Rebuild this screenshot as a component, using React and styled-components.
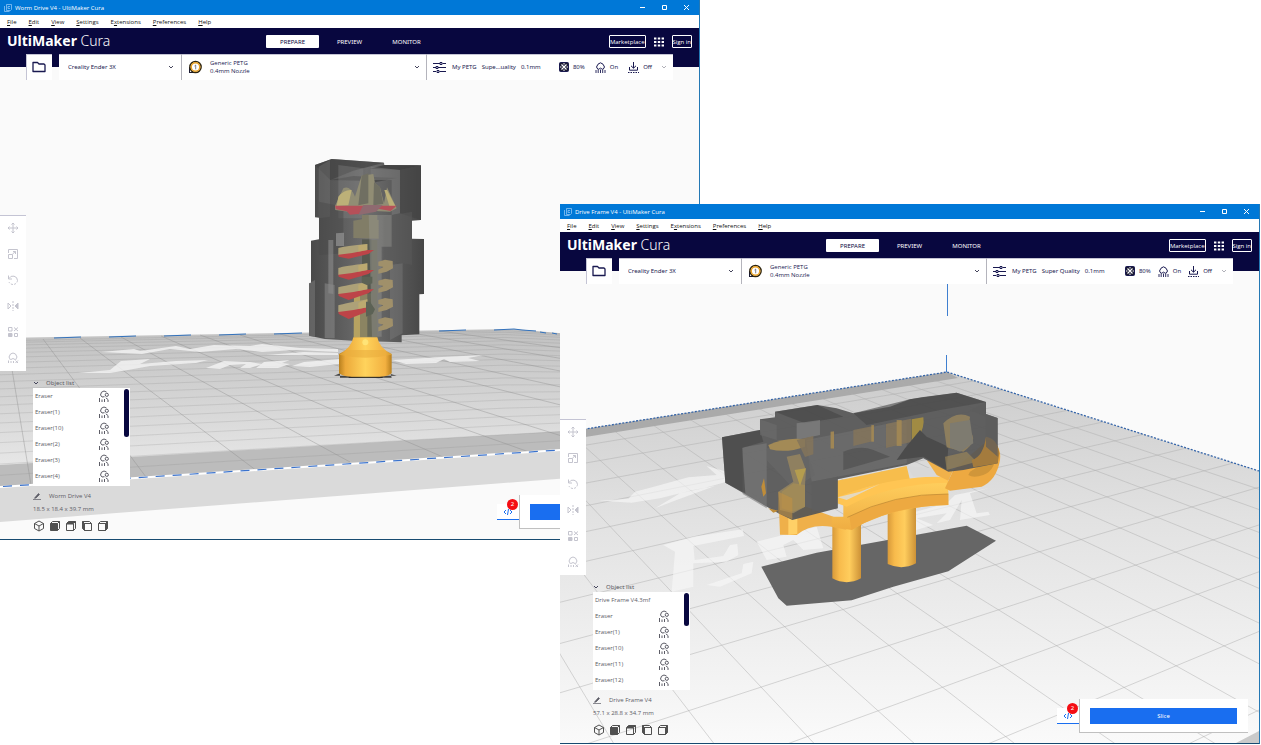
import React from "react";
import styled, { createGlobalStyle, css } from "styled-components";

const GlobalStyle = createGlobalStyle`
  *, *::before, *::after { box-sizing: border-box; }
  body {
    margin: 0;
    background: #ffffff;
    font-family: "Noto Sans", "Open Sans", sans-serif;
    font-size: 6px;
    line-height: 8px;
    color: #191950;
  }
  button, select, input { font: inherit; color: inherit; }
`;

const navy = "#08073f";
const blue = "#196ef0";
const systemFont = `"Open Sans", "Noto Sans", sans-serif`;

/* ---------- desktop and window frame ---------- */

const Desktop = styled.main`
  position: relative;
  width: 100%;
  min-height: 100vh;
  overflow: hidden;
`;

const Window = styled.section`
  position: absolute;
  top: ${(p) => (p.$front ? "204px" : "0")};
  ${(p) => (p.$front ? "right: 1px;" : "left: 0;")}
  width: calc(100% - 561px);
  min-width: 520px;
  display: flex;
  flex-direction: column;
  background: #fafafa;
  border-right: 1px solid #2478b4;
  border-bottom: 1px solid #174a70;
`;

const TitleBar = styled.header`
  display: flex;
  align-items: center;
  height: 15px;
  padding: 0 9px 0 4px;
  gap: 3px;
  background: #0078d7;
  color: #ffffff;
  font-family: ${systemFont};
`;

const WindowTitle = styled.h1`
  flex: 1;
  margin: 0;
  font-size: 6px;
  font-weight: 400;
`;

const WindowControls = styled.div`
  display: flex;
  gap: 15px;
`;

const BareButton = styled.button`
  display: flex;
  align-items: center;
  justify-content: center;
  padding: 0;
  border: 0;
  background: none;
`;

const MenuBar = styled.nav`
  display: flex;
  align-items: center;
  height: 13px;
  padding: 0 7px;
  gap: 12px;
  background: #ffffff;
  color: #111111;
  font-family: ${systemFont};
`;

const MenuItem = styled(BareButton)`
  display: block;
`;

/* ---------- application header ---------- */

const AppHeader = styled.div`
  display: grid;
  grid-template-columns: 1fr auto 1fr;
  align-items: start;
  height: 39px;
  padding: 7px 7px 0;
  background: ${navy};
  color: #ffffff;
`;

const Logo = styled.div`
  font-size: 14px;
  line-height: 12px;
  font-weight: 300;
  white-space: nowrap;
  b { font-weight: 700; }
`;

const Stages = styled.div`
  display: flex;
  gap: 4px;
`;

const StageButton = styled(BareButton)`
  width: 53px;
  height: 13px;
  border-radius: 1px;
  ${(p) =>
    p.$active &&
    css`
      background: #ffffff;
      color: ${navy};
    `}
`;

const Account = styled.div`
  display: flex;
  justify-content: flex-end;
  align-items: center;
  gap: 8px;
`;

const OutlineButton = styled(BareButton)`
  height: 13px;
  border: 1px solid #ffffff;
  border-radius: 1px;
  font-family: ${systemFont};
  white-space: nowrap;
`;

/* ---------- configuration strip ---------- */

const Stage = styled.div`
  position: relative;
  display: flex;
  flex-direction: column;
  min-height: 472px;
`;

const ConfigRow = styled.div`
  position: relative;
  display: flex;
  gap: 7px;
  height: 26px;
  margin: -13px 26px 0;
`;

const OpenButton = styled(BareButton)`
  width: 26px;
  background: #ffffff;
  box-shadow: inset 1px 1px #c4c4d4;
`;

const ConfigBar = styled.div`
  flex: 1;
  display: grid;
  grid-template-columns: 122fr 245fr 247fr;
  background: #ffffff;
  box-shadow: inset 0 1px #c4c4d4;
`;

const PrinterField = styled.label`
  position: relative;
  display: flex;
  align-items: center;
  padding: 0 7px 0 9px;
`;

const PrinterSelect = styled.select`
  flex: 1;
  min-width: 0;
  appearance: none;
  border: 0;
  padding: 0;
  background: none;
`;

const ConfigButton = styled(BareButton)`
  justify-content: flex-start;
  padding: 0 6px;
  border-left: 1px solid #b4b4bc;
  text-align: left;
  white-space: nowrap;
`;

const MaterialText = styled.span`
  flex: 1;
  padding-left: 8px;
  font-family: ${systemFont};
`;

const Profile = styled.span`
  display: flex;
  flex: 1;
  gap: 5px;
  padding-left: 5px;
`;

const Settings = styled.span`
  display: flex;
  gap: ${(p) => (p.$compact ? "7px" : "10px")};
  margin-right: 9px;
`;

const Setting = styled.span`
  display: flex;
  align-items: center;
  gap: 4px;
`;

/* ---------- 3D view overlays ---------- */

const Viewport = styled.svg`
  position: absolute;
  inset: 0;
  width: 100%;
  height: 100%;
`;

const Overlay = styled.div`
  position: relative;
  flex: 1;
  display: flex;
  justify-content: space-between;
  padding: 135px 11px 6px 0;
`;

const Tools = styled.div`
  display: grid;
  grid-auto-rows: 26px;
  width: 26px;
  background: #ffffff;
  box-shadow: inset 0 1px #c4c4d4;
  color: #c4c4ce;
`;

const ObjectPanel = styled.div`
  width: 97px;
  margin: 7px 0 0 33px;
  color: #5c5c66;
`;

const PanelHeader = styled(BareButton)`
  gap: 7px;
  height: 10px;
`;

const ListBox = styled.div`
  display: flex;
  height: 98px;
  background: #ffffff;
`;

const ObjectList = styled.ul`
  flex: 1;
  margin: 0;
  padding: 0;
  list-style: none;
  overflow: hidden;
  font-family: ${systemFont};
`;

const ObjectItem = styled.li`
  display: flex;
  align-items: center;
  justify-content: space-between;
  height: 16px;
  padding: 0 14px 0 2px;
`;

const ScrollThumb = styled.div`
  width: 5px;
  height: ${(p) => (p.$short ? "33px" : "48px")};
  margin: 1px 1px 0 0;
  border-radius: 3px;
  background: ${navy};
`;

const JobName = styled.div`
  display: flex;
  align-items: center;
  gap: 8px;
  height: 10px;
  margin-top: 5px;
  font-family: ${systemFont};
`;

const Dimensions = styled.div`
  height: 10px;
  margin-top: 4px;
  font-family: ${systemFont};
`;

const ViewButtons = styled.div`
  display: flex;
  gap: 4px;
  margin-top: 5px;
  color: #505050;
`;

const Actions = styled.div`
  display: flex;
  align-self: flex-end;
  align-items: center;
  margin-bottom: 4px;
`;

const ScriptButton = styled(BareButton)`
  position: relative;
  width: 22px;
  height: 16px;
  background: #ffffff;
  border-bottom: 1px solid ${blue};
  color: ${blue};
`;

const Badge = styled.span`
  position: absolute;
  top: -5px;
  right: 1px;
  width: 11px;
  height: 11px;
  border-radius: 50%;
  background: #f40d14;
  color: #ffffff;
  line-height: 11px;
  text-align: center;
`;

const ActionCard = styled.div`
  width: 169px;
  padding: 9px 11px 8px 10px;
  background: #ffffff;
  border-left: 1px solid #c0c0c0;
  border-bottom: 1px solid #c0c0c0;
`;

const SliceButton = styled(BareButton)`
  width: 100%;
  height: 16px;
  background: ${blue};
  color: #ffffff;
`;

/* ---------- icons ---------- */

const Svg = ({ size = 12, w, children, sw = 1 }) => (
  <svg
    width={w || size}
    height={size}
    viewBox={`0 0 ${w || size} ${size}`}
    fill="none"
    stroke="currentColor"
    strokeWidth={sw}
    aria-hidden="true"
  >
    {children}
  </svg>
);

const Chevron = ({ faint }) => (
  <Svg size={6}>
    <path d="M1 2l2 2 2-2" stroke={faint ? "#b0b0b8" : "#45455c"} />
  </Svg>
);

const AppIcon = () => (
  <Svg size={8}>
    <path d="M2.500.5h5v5l-1 1h-4zM.5 2v5.500h5M4 2.500h2M4 2.500v2h2" stroke="#8cc4f4" strokeWidth=".8" />
  </Svg>
);

const FolderIcon = () => (
  <Svg size={12} w={14} sw={1.3}>
    <path d="M1 1.500h4.500l1.500 1.500h5l1 1v6.500h-12z" strokeLinejoin="round" />
  </Svg>
);

const SpoolIcon = () => (
  <Svg size={14}>
    <path d="M1.500 7v6M1 12.500h6" stroke="#191932" />
    <circle cx="7.500" cy="7" r="5.600" fill="#ffffff" stroke="#2d2410" strokeWidth="1.500" />
    <circle cx="7.500" cy="7" r="4.300" stroke="#e8a024" strokeWidth="1.500" />
    <path d="M6.500 6l1.200-1v4.300" stroke="#606070" strokeWidth=".8" />
  </Svg>
);

const SlidersIcon = () => (
  <Svg size={12} w={14}>
    <path d="M0 2.500h7M9.500 2.500H13M0 6.500h3M5 6.500h8M0 10.500h3M6.500 10.500H13" />
    <path d="M7 1.500h2v2H7zM3 5.500h2v2H3zM4 9.500h2v2H4z" />
  </Svg>
);

const InfillIcon = () => (
  <Svg size={10}>
    <rect x=".5" y=".5" width="9" height="9" rx="1" fill="#191932" />
    <path d="M2.500 2.500l5 5M7.500 2.500l-5 5" stroke="#ffffff" strokeWidth="1.100" />
    <path d="M5 1v1.500M5 7.500V9M1 5h1.500M7.500 5H9" stroke="#ffffff" />
  </Svg>
);

const SupportIcon = () => (
  <Svg size={11}>
    <path d="M3 7.500L1.500 5 3 2.200 5.500.8 8 2.200 9.500 5 8 7.500" />
    <path d="M3 7.500Q5.500 4.800 8 7.500M1 8v3M3.200 8v3M5.500 7.500V11M7.700 8v3M10 8v3" strokeWidth=".9" />
  </Svg>
);

const AdhesionIcon = () => (
  <Svg size={11}>
    <path d="M5.500 0v6M3 3.800l2.500 2.400L8 3.800M1.500 5v3.200h8V5" />
    <path d="M0 10.500h11" strokeDasharray="1.500 1" />
  </Svg>
);

const EraserIcon = () => (
  <Svg size={12}>
    <path d="M4 7L2.500 5 3.500 2.200 6 1l2.500 1M4 7l2.500-.3M1.500 8v4M4 9.500V12M6.500 9v3M10 10v2" />
    <circle cx="8.800" cy="4.800" r="1.600" />
    <path d="M7.800 7.800l2.500 2" />
  </Svg>
);

const GridIcon = () => (
  <Svg size={10}>
    <path
      d="M0 1.500h10M0 5h10M0 8.500h10"
      strokeWidth="2"
      strokeDasharray="2.400 1.400"
    />
  </Svg>
);

const PencilIcon = () => (
  <Svg size={8}>
    <path d="M2 5.500L5.500 1.500l1 1L3 6l-1.500.3zM0 7.500h8" fill="currentColor" strokeWidth=".7" />
  </Svg>
);

const CodeIcon = () => (
  <Svg size={8} w={10}>
    <path d="M3 2L1 4l2 2M7 2l2 2-2 2M5.500 1l-1 6" />
  </Svg>
);

const toolIcons = [
  ["Move", <path d="M6 1v10M1 6h10M4.500 2.500L6 1l1.500 1.500M4.500 9.500L6 11l1.500-1.500M2.500 4.500L1 6l1.500 1.500M9.500 4.500L11 6 9.500 7.500" />],
  ["Scale", <path d="M1.500 5V1.500h9v9H7M1.500 6.500h4v4h-4zM5.500 6L8.500 3.500M6 3.500h2.500V6" />],
  ["Rotate", <><path d="M1.500 1.500V5H5M2 4.500a4.500 4.500 0 0 1 8.500 2" /><path d="M10.500 6.500a4.500 4.500 0 0 1-8.500 1.500" strokeDasharray="2 1.300" /></>],
  ["Mirror", <><path d="M1 3l3 3-3 3z" /><path d="M11 3L8 6l3 3z" fill="currentColor" /><path d="M6 1v10" strokeDasharray="2 1" /></>],
  ["Per model settings", <><path d="M1.500 1.500H5V5H1.500zM7.500 7.500h3v3h-3zM7 1.500l4 3.500M11 1.500L7 5" /><path d="M1.500 7.500H5v3H1.500z" fill="currentColor" /></>],
  ["Support blocker", <path d="M3.500 8L2 5l1.500-3L6 1l2.500 1L10 5 8.500 8M4 7.500Q6 5.500 8 7.500M1.500 8.500V11M4 9v2M6.500 9v2M8.500 8.500l2.500 2.500M11 8.500L8.500 11" />],
];

const cube = "M6 1l4.500 2.500v5L6 11 1.500 8.500v-5zM1.500 3.500L6 6l4.500-2.500M6 6v5";
const viewIcons = [
  ["3D view", <path d={cube} />],
  ["Front view", <><path d="M1.500 3.500l2-2h7v7l-2 2M8.500 3.500l2-2" /><path d="M1.500 3.500h7v7h-7z" fill="currentColor" /></>],
  ["Top view", <><path d="M1.500 4h7v6.500h-7zM8.500 10.500l2-2v-7" /><path d="M3.500 1.500h7l-2 2h-7z" fill="currentColor" /></>],
  ["Left view", <><path d="M3.500 3.500h7v7h-7zM8.500 1.500h-7M8.500 1.500l2 2" /><path d="M1.500 1.500l2 2v7l-2-2z" fill="currentColor" /></>],
  ["Right view", <><path d="M1.500 3.500h7v7h-7zM3.500 1.500h7M1.500 3.500l2-2" /><path d="M10.500 1.500l-2 2v7l2-2z" fill="currentColor" /></>],
];

/* ---------- 3D scenes ---------- */

const Poly = ({ p, f, o }) => <polygon points={p} fill={f} fillOpacity={o} />;

function lerpLine(t) {
  const s = Math.pow(t, 1.7);
  return `M0 ${340 + 147 * s}L505 ${330 + 124 * s}L560 ${333 + 117 * s}`;
}

const WormScene = () => (
  <Viewport viewBox="0 67 699 472" preserveAspectRatio="xMinYMin slice" aria-hidden="true">
    <defs>
      <linearGradient id="plateA" x1="0" y1="0" x2="0" y2="1">
        <stop offset="0" stopColor="#c0c0c0" />
        <stop offset=".3" stopColor="#cecece" />
        <stop offset=".85" stopColor="#e6e6e6" />
      </linearGradient>
      <linearGradient id="gold" x1="0" y1="0" x2="1" y2="0">
        <stop offset="0" stopColor="#b8801e" />
        <stop offset=".12" stopColor="#eca93a" />
        <stop offset=".5" stopColor="#ffd35c" />
        <stop offset=".88" stopColor="#f2b040" />
        <stop offset="1" stopColor="#b8801e" />
      </linearGradient>
      <linearGradient id="box" x1="0" y1="0" x2="1" y2="0">
        <stop offset="0" stopColor="#484848" />
        <stop offset=".5" stopColor="#6e6e6e" />
        <stop offset="1" stopColor="#464646" />
      </linearGradient>
      <clipPath id="clipA"><path d="M0 338L515 329 699 346V440L0 487z" /></clipPath>
    </defs>
    <path d="M0 67h699v472H0z" fill="#fafafa" />
    <path d="M0 486L699 441V468L0 522z" fill="#dadada" />
    <path d="M0 338L515 329 699 346V441L0 487z" fill="url(#plateA)" />
    <path d="M0 465L699 423V441L0 487z" fill="#bcbcbc" />
    <g clipPath="url(#clipA)" fill="none" stroke="#8c8c8c">
      <path
        d="M7 339L31 485M43 339L146 477M80 338L257 471M121 337L350 462M161 336L443 457M200 335L529 452M240 335L600 448M280 334L699 440M320 333L699 418M360 332L699 398M400 331L699 382M440 331L699 367"
        strokeOpacity=".5"
        strokeWidth=".8"
      />
      {Array.from({ length: 20 }, (_, i) => (
        <path key={i} d={lerpLine((i + 1) / 21)} strokeOpacity=".32" strokeWidth=".7" />
      ))}
    </g>
    <g fill="#f4f4f4" fillOpacity=".8">
      <path d="M101 352L134 349 140 351 176 346 190 349 214 345 250 346 262 344 300 348 338 349V352L296 350 262 352 236 349 200 352 170 349 142 354z" />
      <path d="M78 373L110 370 121 361 150 359 140 364 176 361 208 360 196 363 150 366 128 370 110 373z" />
      <path d="M206 368L224 361 250 362 262 364 250 368 240 368 246 364 230 365 220 369zM256 368l8-6 26-2-8 3 8 1-12 4zM292 366l12-4 36-3v5l-30 3zM392 360l50-3 42-2-16 3 12 3-30 1-6-3-8 4-30 1z" />
      <path d="M266 355l38-3 34 1v2z" />
    </g>
    <path d="M54 338l27-1M109 337l27-1M164 336l27-1M219 335l27-1M274 334l28-1M439 331l27-1M494 330l20-1 8 1 14 1M540 332l6 1M552 333l5 1" stroke="#3272bd" strokeWidth="1" fill="none" />
    <path d="M0 487L560 450" stroke="#ffffff" strokeWidth="2" />
    <path d="M3 486.500L560 450" stroke="#3a72cc" strokeWidth="1.200" strokeDasharray="9 8" />

    <g transform="translate(290 150) scale(.33333)">
      <path d="M75 45L125 27 282 38 283 45 393 46V210L366 212V266L402 267V432L388 433V553L335 556V577L190 572 105 567 57 557V400L63 399V272L87 268V203L75 202z" fill="url(#box)" />
      <Poly p="75,45 125,27 282,38 190,62 121,90" f="#424242" o=".7" />
      <Poly p="121,90 190,78 320,84 240,100 215,92" f="#434343" o=".7" />
      <Poly p="283,45 393,46 330,60 240,56" f="#3d3d3d" o=".8" />
      <Poly p="330,60 393,46 393,210 330,190" f="#414141" o=".55" />
      <Poly p="242,50 330,60 330,190 305,195 305,90 242,90" f="#7c7c7c" o=".55" />
      <Poly p="86,50 120,30 120,200 86,205" f="#7b7b7b" o=".35" />
      <Poly p="145,45 220,55 220,205 145,205" f="#868686" o=".35" />
      <Poly p="87,155 160,170 160,310 87,315" f="#4a4a4a" o=".5" />
      <Poly p="280,200 366,185 366,345 280,330" f="#595959" o=".5" />
      <Poly p="115,270 130,270 130,432 115,430" f="#aaaaaa" o=".4" />
      <Poly p="104,400 134,405 134,565 104,565" f="#8a8a8a" o=".55" />
      <Poly p="57,400 75,390 75,560 57,557" f="#7e7e7e" o=".5" />
      <Poly p="300,345 338,340 338,550 300,570" f="#858585" o=".35" />
      <Poly p="138,250 162,248 162,288 138,288" f="#a0a0a0" o=".6" />
      <path d="M135 168L160 115Q180 105 195 140L205 108 215 77 250 72 255 100 270 112 282 160 291 112 320 175 300 185 240 182 200 188 136 180z" fill="#918d74" />
      <path d="M145 140Q162 118 185 120L175 166 140 168zM283 120l8 0 27 52-20-4z" fill="#bcb078" />
      <path d="M215 77L235 70V160L205 166zM252 96l18 16 10 50-30 4z" fill="#706f62" />
      <path d="M135 167H320L302 183 265 176 205 192 180 194 170 184 138 178z" fill="#b65059" />
      <path d="M220 165L278 165 258 185 205 195z" fill="#8f6a70" />
      <path d="M216 195H262V210H266V266L190 264 190 212 216 208z" fill="#817d67" />
      <path d="M192 425H260V562H190z" fill="#8b8462" />
      <path d="M192 425h18V562h-18z" fill="#b6a261" />
      <path d="M232 270H262V560H232z" fill="#666758" />
      <path d="M216 268h28V430h-28z" fill="#565950" />
      <path d="M236 195H305V290H275V560H246z" fill="#9a9a96" fillOpacity=".4" />
      {[325, 382, 440, 498].map((y) => (
        <path key={y} d={`M265 ${y + 10}L285 ${y + 4} 308 ${y + 8} 309 ${y + 30} 290 ${y + 40} 265 ${y + 46}V${y + 34}L280 ${y + 26} 265 ${y + 22}z`} fill="#a0906a" />
      ))}
      {[286, 346, 404, 458].map((y, i) => (
        <g key={y}>
          <path d={`M145 ${y + 26}Q165 ${y + 14} 228 ${y + 14}L252 ${y + 14} 235 ${y + 26} 176 ${y + 40 + i * 3} 146 ${y + 34}z`} fill="#bd4448" />
          <path d={`M145 ${y + 8}Q165 ${y + 2} 232 ${y - 4 - i * 2}V${y + 14}Q190 ${y + 24} 145 ${y + 28}z`} fill="#ada178" />
          <path d={`M205 ${y}L232 ${y - 4 - i * 2}V${y + 14}L205 ${y + 19}z`} fill="#c0ad6c" fillOpacity=".7" />
        </g>
      ))}
      <path d="M228 455L240 455 255 478 248 492 228 500zM215 380h32v20l-15 6-17-8z" fill="#5c6255" />
      <path d="M132 677L150 670V683H305L302 672 320 677z" fill="#444444" />
      <path d="M190 562H262Q268 595 305 612V670Q292 683 227 683T147 670V612Q184 595 190 562z" fill="url(#gold)" />
      <path d="M147 614Q227 632 305 614L305 612 280 600H172z" fill="#e9ad3e" fillOpacity=".6" />
      <ellipse cx="226" cy="577" rx="9" ry="9" fill="#fff08a" fillOpacity=".6" />
      <path d="M176 682H278" stroke="#222222" strokeWidth="3" />
    </g>
  </Viewport>
);

const gridDown = Array.from({ length: 22 }, (_, i) => {
  const k = 3.15 - 0.17 * (i + 1);
  return `M260 154L${260 + k * 640} 794`;
}).join("");
const gridUp = Array.from({ length: 17 }, (_, i) => {
  const k = 6.37 - 0.33 * (i + 1);
  return `M2453 136L${2453 - k * 700} 836`;
}).join("");

const FrameScene = () => (
  <Viewport viewBox="560 271 699 472" preserveAspectRatio="xMinYMin slice" aria-hidden="true">
    <defs>
      <linearGradient id="plateB" x1="0" y1="0" x2="0" y2="1">
        <stop offset="0" stopColor="#cccccc" />
        <stop offset=".4" stopColor="#e2e2e2" />
        <stop offset="1" stopColor="#fafafa" />
      </linearGradient>
      <linearGradient id="leg" x1="0" y1="0" x2="1" y2="0">
        <stop offset="0" stopColor="#d89a3a" />
        <stop offset=".25" stopColor="#f8bb4c" />
        <stop offset=".6" stopColor="#ffcd5d" />
        <stop offset="1" stopColor="#cd9237" />
      </linearGradient>
      <linearGradient id="beam" x1="0" y1="0" x2="0" y2="1">
        <stop offset="0" stopColor="#ffcf5e" />
        <stop offset="1" stopColor="#efad42" />
      </linearGradient>
      <clipPath id="clipB"><path d="M560 433L947 372 1259 471V743H560z" /></clipPath>
    </defs>
    <path d="M560 271h699v472H560z" fill="#fafafa" />
    <path d="M560 433L947 372 1259 471V743H560z" fill="url(#plateB)" />
    <path d="M560 433L947 372 958 378 560 441z" fill="#aaaaaa" />
    <path d="M1236 743L1259 731V743z" fill="#cacaca" />
    <g clipPath="url(#clipB)" fill="none" stroke="#acacac" strokeWidth=".8" strokeOpacity=".6">
      <path d={gridDown} />
      <path d={gridUp} />
    </g>
    <path d="M560 433L947 372 1259 471" stroke="#3464a8" strokeWidth="1.300" strokeDasharray="2 1.500" fill="none" />
    <path d="M947.500 284V316M946.500 355V372" stroke="#3e7fd0" />

    <g transform="translate(560 360) scale(.33333)">
      <g fill="#f8f8f8" fillOpacity=".65">
        <path d="M118 422L205 416 225 395 290 378 385 352 470 345 440 318 500 335V365L430 385 360 400 285 445 350 420 465 378 400 390 300 415 215 428z" />
        <path d="M310 555L400 530 548 508 552 528 400 558 404 600 490 588 510 555 532 552 535 585 500 605 400 610V680L335 695 345 575z" />
        <path d="M440 675L545 640 550 612 580 605 575 640 480 680zM590 545L770 500 790 565 730 570 700 540 670 555 680 590 620 600z" />
        <path d="M1050 460L1160 430 1185 405 1285 385 1230 400 1250 460 1285 455 1290 465 1200 480 1205 420 1170 480 1130 490 1160 460 1070 475 1120 495 1050 515z" />
      </g>
      <path d="M604 620L770 578 1220 497 1308 542 1165 634 1000 680 875 721 680 737 655 715z" fill="#666666" />
      <path d="M817 480H903V655Q860 678 817 655z" fill="url(#leg)" />
      <path d="M983 430H1068V610Q1026 632 983 612z" fill="url(#leg)" />
      <path d="M655 395L710 430 820 470 860 510 815 500Q750 490 710 525L660 524z" fill="#efb04a" />
      <path d="M685 470H712V522L685 525z" fill="#ffd067" />
      <path d="M815 365Q920 345 1040 318L1050 360Q920 370 830 420z" fill="#f7bd4c" />
      <path d="M850 430Q980 370 1165 362V435Q990 440 875 510L815 500 815 470 850 470z" fill="url(#beam)" />
      <path d="M832 412Q980 350 1165 348V368Q990 370 860 440L832 430z" fill="#ffc553" />
      <path d="M868 470Q1000 402 1165 402V435Q985 440 875 510z" fill="#eda941" />
      <path d="M862 472Q1000 400 1165 402" stroke="#b98734" strokeWidth="2" fill="none" />
      <path d="M1155 385L1180 330 1290 235Q1325 260 1320 300 1310 360 1265 380L1170 392z" fill="#eda941" />
      <path d="M1230 335Q1290 300 1308 270 1310 330 1270 345 1240 355 1225 345z" fill="#d0963a" />
      <path d="M1040 318L1180 330 1165 350H1060z" fill="#d8d8d8" />
      <path d="M1100 300L1180 330 1165 362 1130 345z" fill="#f0b14a" />

      <path d="M486 232L600 210V178L645 172V155L772 135 830 145 880 160 990 140 1050 118 1085 112 1190 98 1278 126V162L1313 174V310L1210 330 1165 335 1090 295 1040 315 833 358V445L697 480 655 460 496 368z" fill="#565656" fillOpacity=".93" />
      <Poly p="548,262 620,250 620,445 548,402" f="#7c7c7c" o=".6" />
      <Poly p="486,232 600,210 610,245 546,264 556,400 496,368" f="#494949" o=".7" />
      <Poly p="645,155 772,135 850,170 735,190" f="#444444" o=".6" />
      <Poly p="710,190 780,180 780,225 710,240" f="#858585" o=".65" />
      <Poly p="600,178 650,195 650,240 600,225" f="#6c6c6c" o=".6" />
      <Poly p="738,240 1040,180 1040,310 755,365" f="#727272" o=".55" />
      <Poly p="620,265 735,260 765,345 700,385 620,300" f="#686868" o=".7" />
      <Poly p="755,365 833,350 833,445 755,455" f="#5e5e5e" o=".8" />
      <path d="M625 255Q680 230 735 238V260Q680 280 630 268z" fill="#a38a56" />
      <path d="M680 290L720 282 738 330 735 375 735 440 700 460 660 450 655 395 700 365z" fill="#8f8060" />
      <path d="M665 395L700 370 735 375V440L700 455 665 445z" fill="#a08a58" />
      <path d="M704 330L738 325 720 378z" fill="#b59d4e" />
      <path d="M604 380L612 355 618 400 610 410zM625 445L655 452 640 458z" fill="#c08d39" />
      <path d="M710 240l50-12v55l-25 8zM812 215l10-2v54h-10zM880 210l60-12v45l-60 15zM978 192l75-16v70l-75 18z" fill="#84745a" fillOpacity=".85" />
      <path d="M812 215h10v50h-10zM934 195h8v50h-8zM1010 180h15v78h-15z" fill="#ad8e52" fillOpacity=".7" />
      <path d="M1055 178l35-6q5 30-15 60l-20 15z" fill="#a18b43" />
      <path d="M1035 265L1080 210 1100 230 1165 260 1160 330 1090 290 1010 300z" fill="#4b4b4b" />
      <path d="M850 275Q900 255 940 270L990 290 850 330z" fill="#454545" fillOpacity=".5" />
      <path d="M1150 190Q1190 150 1230 170L1225 210Q1260 240 1210 275L1160 262z" fill="#8d7e5e" />
      <path d="M1170 190L1230 180 1240 250 1200 275 1170 262z" fill="#7e7b70" />
      <path d="M1155 290l65-15 30 30-90 25z" fill="#a28a58" fillOpacity=".6" />
      <path d="M1278 230Q1312 235 1318 280L1313 310 1240 322 1235 300Q1270 290 1278 230z" fill="#a47b3d" />
      <path d="M1230 150L1278 126V162L1313 174V290L1278 260V170z" fill="#5c5c5c" fillOpacity=".7" />
      <path d="M880 160L1050 118 1190 98 1278 126 1140 150 920 195z" fill="#484848" fillOpacity=".6" />
      <path d="M655 395L697 415V478L655 460z" fill="#bf9145" fillOpacity=".6" />
      <path d="M833 412L900 395 960 372 860 420z" fill="#dddddd" fillOpacity=".8" />
    </g>
  </Viewport>
);

/* ---------- window content ---------- */

const menus = [
  ["", "F", "ile"],
  ["", "E", "dit"],
  ["", "V", "iew"],
  ["", "S", "ettings"],
  ["E", "x", "tensions"],
  ["", "P", "references"],
  ["", "H", "elp"],
];

function CuraWindow({ front, name, quality, objects, size, scene }) {
  return (
    <Window $front={front}>
      <TitleBar>
        <AppIcon />
        <WindowTitle>{name} - UltiMaker Cura</WindowTitle>
        <WindowControls>
          <BareButton aria-label="Minimize"><Svg size={7}><path d="M1 3.500h5" /></Svg></BareButton>
          <BareButton aria-label="Maximize"><Svg size={7}><path d="M1.500 1.500h4v4h-4z" /></Svg></BareButton>
          <BareButton aria-label="Close"><Svg size={7}><path d="M1 1l5 5M6 1L1 6" /></Svg></BareButton>
        </WindowControls>
      </TitleBar>
      <MenuBar>
        {menus.map(([a, u, b]) => (
          <MenuItem key={a + u + b}>{a}<u>{u}</u>{b}</MenuItem>
        ))}
      </MenuBar>
      <AppHeader>
        <Logo><b>UltiMaker</b> Cura</Logo>
        <Stages>
          <StageButton $active>PREPARE</StageButton>
          <StageButton>PREVIEW</StageButton>
          <StageButton>MONITOR</StageButton>
        </Stages>
        <Account>
          <OutlineButton>Marketplace</OutlineButton>
          <BareButton aria-label="Applications"><GridIcon /></BareButton>
          <OutlineButton>Sign in</OutlineButton>
        </Account>
      </AppHeader>
      <Stage>
        {scene}
        <ConfigRow>
          <OpenButton aria-label="Open file"><FolderIcon /></OpenButton>
          <ConfigBar>
            <PrinterField>
              <PrinterSelect aria-label="Printer">
                <option>Creality Ender 3X</option>
              </PrinterSelect>
              <Chevron />
            </PrinterField>
            <ConfigButton>
              <SpoolIcon />
              <MaterialText>Generic PETG<br />0.4mm Nozzle</MaterialText>
              <Chevron />
            </ConfigButton>
            <ConfigButton>
              <SlidersIcon />
              <Profile>
                <span>My PETG</span>
                <span>{quality}</span>
                <span>0.1mm</span>
              </Profile>
              <Settings $compact={front}>
                <Setting><InfillIcon />80%</Setting>
                <Setting><SupportIcon />On</Setting>
                <Setting><AdhesionIcon />Off</Setting>
              </Settings>
              <Chevron faint />
            </ConfigButton>
          </ConfigBar>
        </ConfigRow>
        <Overlay>
          <div>
            <Tools>
              {toolIcons.map(([label, icon]) => (
                <BareButton key={label} aria-label={label}><Svg>{icon}</Svg></BareButton>
              ))}
            </Tools>
            <ObjectPanel>
              <PanelHeader><Chevron />Object list</PanelHeader>
              <ListBox>
                <ObjectList>
                  {objects.map((o) => (
                    <ObjectItem key={o}>
                      {o}
                      {o.startsWith("Eraser") && <EraserIcon />}
                    </ObjectItem>
                  ))}
                </ObjectList>
                <ScrollThumb $short={front} />
              </ListBox>
              <JobName><PencilIcon />{name}</JobName>
              <Dimensions>{size}</Dimensions>
              <ViewButtons>
                {viewIcons.map(([label, icon]) => (
                  <BareButton key={label} aria-label={label}><Svg>{icon}</Svg></BareButton>
                ))}
              </ViewButtons>
            </ObjectPanel>
          </div>
          <Actions>
            <ScriptButton aria-label="Post-processing scripts">
              <CodeIcon />
              <Badge>2</Badge>
            </ScriptButton>
            <ActionCard><SliceButton>Slice</SliceButton></ActionCard>
          </Actions>
        </Overlay>
      </Stage>
    </Window>
  );
}

export default function App() {
  return (
    <>
      <GlobalStyle />
      <Desktop>
        <CuraWindow
          name="Worm Drive V4"
          quality="Supe...uality"
          size="18.5 x 18.4 x 39.7 mm"
          objects={["Eraser", "Eraser(1)", "Eraser(10)", "Eraser(2)", "Eraser(3)", "Eraser(4)"]}
          scene={<WormScene />}
        />
        <CuraWindow
          front
          name="Drive Frame V4"
          quality="Super Quality"
          size="57.1 x 28.8 x 34.7 mm"
          objects={["Drive Frame V4.3mf", "Eraser", "Eraser(1)", "Eraser(10)", "Eraser(11)", "Eraser(12)"]}
          scene={<FrameScene />}
        />
      </Desktop>
    </>
  );
}
